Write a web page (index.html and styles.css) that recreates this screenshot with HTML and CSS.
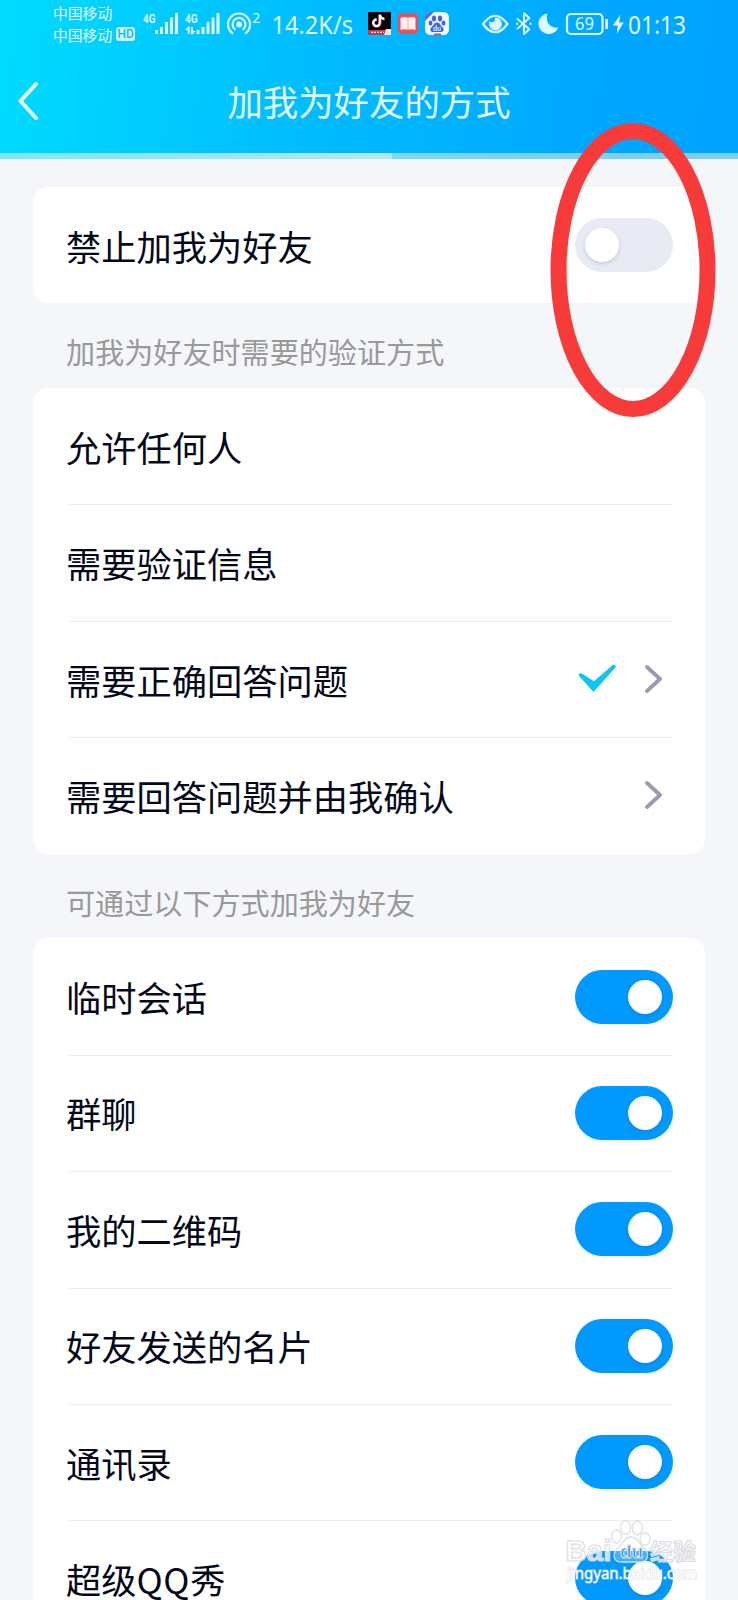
FILE: index.html
```html
<!DOCTYPE html>
<html lang="zh-CN">
<head>
<meta charset="utf-8">
<title>加我为好友的方式</title>
<link rel="stylesheet" href="styles.css">
</head>
<body>
<div class="screen">
<header class="header">
  <div class="status">
    <div class="carriers">
      <span>中国移动</span>
      <span class="carrier">中国移动<b class="hd">HD</b></span>
    </div>
    <svg class="signals" width="120" height="44" viewBox="140 0 120 44">
      <g class="net"><text x="143" y="22.500" textLength="12.500" lengthAdjust="spacingAndGlyphs">4G</text><text x="185" y="22.500" textLength="12.500" lengthAdjust="spacingAndGlyphs">4G</text></g>
      <path class="fill" d="M155 30h3v4h-3zM160 27h3v7h-3zM165 22h3v12h-3zM170 17.500h3V34h-3zM175 13h3v21h-3zM196.500 30h3v4h-3zM201.500 27h3v7h-3zM206.500 22h3v12h-3zM211.500 17.500h3V34h-3zM216.500 13h3v21h-3z"/>
      <path class="fill" d="M185 30l3.500-3.500h1.200V34h-2v-4zM191 27h2v4h2.500L192.300 34.500H191z"/>
      <circle class="fill" cx="239" cy="24.500" r="3"/>
      <path class="line" d="M235.300 29.800a6.500 6.500 0 1 1 7.400 0M233 33.700a11 11 0 1 1 12 0"/>
      <text class="count" x="252.300" y="23">2</text>
    </svg>
    <svg class="speed" width="84" height="44" viewBox="270 0 84 44"><text x="271.500" y="33.700" textLength="81.500" lengthAdjust="spacingAndGlyphs">14.2K/s</text></svg>
    <svg class="apps" width="84" height="44" viewBox="367 0 84 44">
      <path fill="#080507" d="M368 12h23v23h-23z"/>
      <path fill="#d83244" d="M368 30h18l-2 5h-16z"/><path fill="#ffe1cf" d="M386 29h5v6h-7z"/>
      <path stroke="#fff" stroke-width="1.200" stroke-dasharray="2 1" d="M371 32.300h13"/>
      <path fill="none" stroke="#ff365e" stroke-width="2.400" d="M380.300 15v8a3.300 3.300 0 1 1-3.300-3.300M380.300 15.500c.6 2.400 2 3.500 4.500 3.700"/>
      <path fill="none" stroke="#fff" stroke-width="2.300" d="M379.700 14.500v8.300a3.300 3.300 0 1 1-3.300-3.300M379.700 15c.6 2.500 2 3.600 4.500 3.800"/>
      <rect x="397.700" y="13.300" width="20.500" height="20.500" rx="4" fill="#e4505e"/>
      <path fill="#fff0f0" d="M400.500 18q4-1.800 7.300-.2v12q-3.300-1.300-7.300.2zM408.200 17.800q3.300-1.600 7.300.2v12q-4-1.500-7.300-.2z"/>
      <rect x="425" y="12" width="24" height="23" rx="5.500" fill="#f4f8ff"/>
      <path fill="#4773e6" d="M425 21v-3.500a5.500 5.500 0 0 1 5.500-5.500h3.500z"/>
      <g fill="#4068d9"><ellipse cx="434" cy="18.500" rx="2.100" ry="3"/><ellipse cx="440" cy="18.500" rx="2.100" ry="3"/><ellipse cx="430.500" cy="23" rx="2" ry="2.600"/><ellipse cx="443.500" cy="23" rx="2" ry="2.600"/><path d="M437 22.500c3 0 3.500 3 5.500 4.700 2.200 2 1 4.800-1.500 4.800h-8c-2.700 0-3.700-2.800-1.500-4.800 2-1.700 2.500-4.700 5.500-4.700z"/></g>
      <text class="du" x="433" y="30.500">du</text><path fill="#db4456" d="M434 33.500h7V35h-7z"/>
    </svg>
    <svg class="indicators" width="146" height="44" viewBox="481 0 146 44">
      <path class="line" d="M483 24Q495.200 7.500 507.500 24 495.200 40.500 483 24z"/>
      <path class="fill" d="M494.500 17.500a6.500 6.500 0 1 1-5 3.800c1.300 1.500 4.200 1.500 5.200-.5.500-1 .4-2.300-.2-3.300z"/>
      <path class="line thin" d="M517 18.500l12.300 10.700-5.300 4.800V13.300l5.300 4.800L517 29M516 23.700h2M529.500 23.700h2"/>
      <path class="fill" d="M547.500 13.500c-3 7.500 2.800 15.500 10.800 14A10.300 10.300 0 1 1 547.500 13.500z"/>
      <rect class="line" x="567" y="14" width="35.500" height="20" rx="4"/>
      <path class="fill" d="M605.300 19h2.700v10h-2.700z"/>
      <text class="level" x="575" y="30.300" textLength="19" lengthAdjust="spacingAndGlyphs">69</text>
      <path class="fill" d="M620.500 14.500l-7.700 11h5l-1 8.500 6.900-11.500h-4.700z"/>
    </svg>
    <svg class="clock" width="62" height="44" viewBox="627 0 62 44"><text x="628" y="33.700" textLength="58" lengthAdjust="spacingAndGlyphs">01:13</text></svg>
  </div>
  <div class="titlebar">
    <svg class="back" width="24" height="42" viewBox="0 0 24 42"><path d="M21 4L5.500 21 21 38"/></svg>
    <h1>加我为好友的方式</h1>
  </div>
  <div class="progress"><div class="loaded"></div></div>
</header>
<main class="content">
  <section class="card">
    <div class="row first"><span>禁止加我为好友</span><i class="toggle off"></i></div>
  </section>
  <h2>加我为好友时需要的验证方式</h2>
  <section class="card">
    <div class="row"><span>允许任何人</span></div>
    <div class="row"><span>需要验证信息</span></div>
    <div class="row"><span>需要正确回答问题</span>
      <div class="marks">
        <svg width="40" height="30" viewBox="0 0 40 30"><path fill="#10c5f1" d="M1.300 12.200Q-.2 10.500 1.600 9.500q1.200-.8 2.800.2l11.500 7.500L34.500 1.200Q36-.1 37.300 1.400q1 1.400-.3 2.700L15.500 28z"/></svg>
        <svg class="chevron" width="20" height="32" viewBox="0 0 20 32"><path d="M5 4l13 12L5 28"/></svg>
      </div>
    </div>
    <div class="row"><span>需要回答问题并由我确认</span>
      <div class="marks"><svg class="chevron" width="20" height="32" viewBox="0 0 20 32"><path d="M5 4l13 12L5 28"/></svg></div>
    </div>
  </section>
  <h2>可通过以下方式加我为好友</h2>
  <section class="card">
    <div class="row"><span>临时会话</span><i class="toggle"></i></div>
    <div class="row"><span>群聊</span><i class="toggle"></i></div>
    <div class="row"><span>我的二维码</span><i class="toggle"></i></div>
    <div class="row"><span>好友发送的名片</span><i class="toggle"></i></div>
    <div class="row"><span>通讯录</span><i class="toggle"></i></div>
    <div class="row"><span>超级<span class="latin">QQ</span>秀</span><i class="toggle"></i></div>
  </section>
</main>
<svg class="highlight" width="168" height="298" viewBox="0 0 168 298"><ellipse cx="84" cy="149" rx="74.500" ry="139"/></svg>
<svg class="watermark" width="140" height="68" viewBox="560 1518 140 68">
  <g class="paw"><ellipse cx="616.500" cy="1536.500" rx="4.800" ry="6.500"/><ellipse cx="625.700" cy="1527.500" rx="5" ry="7"/><ellipse cx="637.300" cy="1528" rx="5" ry="7"/><ellipse cx="645" cy="1539" rx="5" ry="6.200"/><path d="M631 1537c7 0 8 7 13 11 6 5 4 14-3 14h-20c-8 0-9-9-3-14 5-4 6-11 13-11z"/></g>
  <g class="brand"><text x="565.500" y="1561" textLength="46" lengthAdjust="spacingAndGlyphs">Bai</text><text class="small" x="620" y="1558">du</text><text class="cn" x="650" y="1560" textLength="46" lengthAdjust="spacingAndGlyphs">经验</text></g>
  <text class="site" x="567" y="1579" textLength="130" lengthAdjust="spacingAndGlyphs">jingyan.baidu.com</text>
</svg>
</div>
</body>
</html>
```
FILE: styles.css
```css
* { box-sizing: border-box; }
body { margin: 0; background: #f4f6fa; font-family: "Noto Sans CJK SC", sans-serif; }
.screen { position: relative; height: 1600px; overflow: hidden; }
.header { height: 159px; background: linear-gradient(98deg, #00dcff 0%, #00bfff 38%, #00a7ff 80%, #00a3ff 100%); color: #e4fbff; }
.status { display: flex; height: 60px; }
.carriers { display: flex; flex-direction: column; width: 87px; margin-left: 53px; padding-top: 2px; font-size: 14.800px; line-height: 21.500px; white-space: nowrap; }
.carrier { display: flex; align-items: center; }
.hd { display: block; width: 19px; height: 14px; margin-left: 4px; border-radius: 3px; background: #d9f8ff; color: #00bdf8; font: 500 12px/14px Roboto, sans-serif; text-align: center; }
.status svg { display: block; flex: none; overflow: visible; }
.speed { margin-left: 10px; }
.apps { margin-left: 13px; }
.indicators { margin-left: 30px; }
.fill, .status text { fill: #dffaff; }
.line { fill: none; stroke: #dffaff; stroke-width: 2.200; stroke-linejoin: round; }
.thin { stroke-width: 2; }
.net { font: bold 12.500px Roboto, sans-serif; }
.count { font: 14px "Noto Sans", sans-serif; }
.speed, .clock { font: 24.600px "Noto Sans", sans-serif; }
.level { font: 18px "Noto Sans", sans-serif; }
.du { font: bold 7px Lato, sans-serif; }
.titlebar { display: grid; grid-template-columns: 60px 1fr 60px; align-items: center; height: 93px; padding-bottom: 11px; }
.back { margin-left: 15px; fill: none; stroke: #eafcff; stroke-width: 4; stroke-linecap: round; stroke-linejoin: round; }
h1 { margin: 0; font-size: 35.400px; line-height: 50px; font-weight: 400; text-align: center; }
.progress { height: 6px; background: rgba(244, 250, 240, .5); }
.loaded { width: 392px; height: 6px; background: linear-gradient(90deg, rgba(255, 255, 255, 0), rgba(255, 255, 255, .42)); }
.content { padding: 28px 33px 0; }
.card { border-radius: 15px; background: #fff; padding: 0 33px; }
.row { display: flex; align-items: center; justify-content: space-between; height: 116.400px; font-size: 35.250px; line-height: 50px; color: #03081a; white-space: nowrap; }
.row > span { padding-top: 1px; }
.latin { letter-spacing: .7px; }
.row + .row { background: linear-gradient(#ebecf0, #ebecf0) 3px 0 / 100% 1px no-repeat; }
h2 { margin: 0; padding: 6px 33px 0; height: 84.700px; font-size: 29.100px; line-height: 84px; font-weight: 400; color: #999; white-space: nowrap; }
.toggle { display: flex; align-items: center; justify-content: flex-end; width: 98px; height: 54px; margin-right: -.7px; padding: 0 11px 0 10px; border-radius: 27px; background: #0099ff; }
.toggle::before { content: ""; width: 34px; height: 34px; border-radius: 50%; background: #fff; box-shadow: 0 2px 4px rgba(60, 80, 120, .2); }
.off { justify-content: flex-start; background: #e8ebf3; }
.first .off { margin-bottom: 1px; }
.marks { display: flex; align-items: center; gap: 24px; padding-right: 10px; }
.chevron { fill: none; stroke: #9b9cab; stroke-width: 3.800; stroke-linecap: round; stroke-linejoin: round; }
.highlight { position: absolute; left: 548.500px; top: 121px; fill: none; stroke: #f73b3a; stroke-width: 16; }
.watermark { position: absolute; left: 560px; top: 1518px; overflow: visible; }
.paw { fill: rgba(255, 255, 255, .25); stroke: #dcdfe4; stroke-width: 1.300; }
.brand { font: bold 30px "Liberation Sans", sans-serif; fill: rgba(255, 255, 255, .75); stroke: #dadde3; stroke-width: 1.200; }
.brand .small { font-size: 19px; fill: #1598f0; }
.cn { font-family: "Noto Sans CJK SC", sans-serif; font-size: 23px; }
.site { font: 15.500px "Noto Sans", sans-serif; fill: #fff; stroke: rgba(205, 210, 220, .6); stroke-width: 1.400; paint-order: stroke; }
```
